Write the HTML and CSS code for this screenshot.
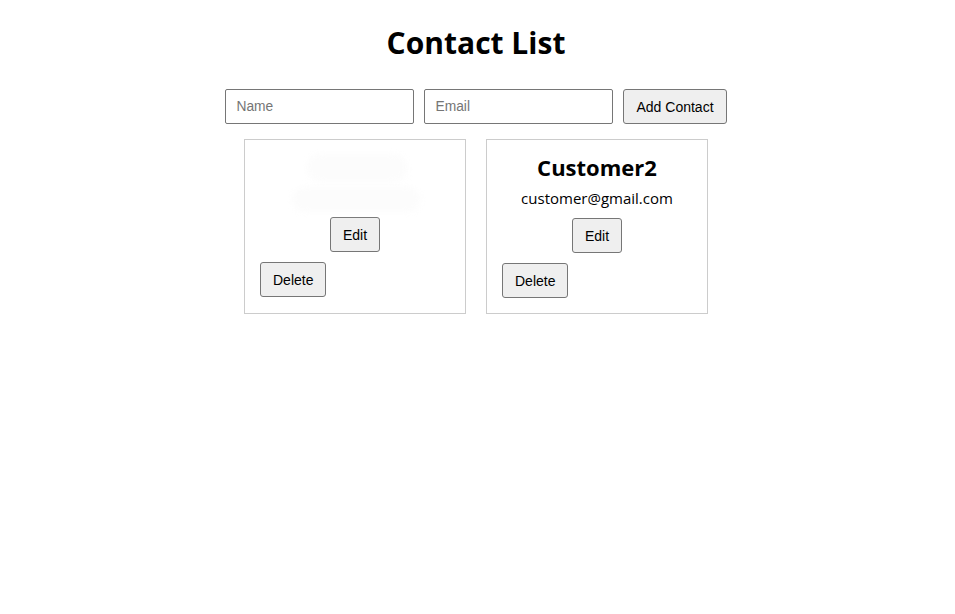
FILE: index.html
```html
<!DOCTYPE html>
<html lang="en">
<head>
<meta charset="utf-8">
<title>Contact List</title>
<link rel="stylesheet" href="styles.css">
</head>
<body>
<div class="app">
  <h1 class="title">Contact List</h1>
  <form class="add-form">
    <input class="field" type="text" placeholder="Name">
    <input class="field" type="email" placeholder="Email">
    <button class="btn" type="button">Add Contact</button>
  </form>
  <div class="cards">
    <div class="card">
      <div class="ghost">
        <div class="ghost-name"></div>
        <div class="ghost-email"></div>
      </div>
      <div class="edit-row"><button class="btn" type="button">Edit</button></div>
      <div class="delete-row"><button class="btn" type="button">Delete</button></div>
    </div>
    <div class="card">
      <h3 class="name">Customer2</h3>
      <p class="email">customer@gmail.com</p>
      <div class="edit-row"><button class="btn" type="button">Edit</button></div>
      <div class="delete-row"><button class="btn" type="button">Delete</button></div>
    </div>
  </div>
</div>
</body>
</html>
```
FILE: styles.css
```css
html, body {
  margin: 0;
  padding: 0;
  background: #ffffff;
}
body {
  font-family: "Open Sans", "Noto Sans", sans-serif;
  color: #000;
}
.app {
  display: flex;
  flex-direction: column;
  align-items: center;
  padding-top: 23px;
  padding-right: 3px;
}
.title {
  margin: 0 0 27px 0;
  font-size: 30px;
  font-weight: 700;
  line-height: 39px;
}
.add-form {
  display: flex;
  gap: 10px;
  margin-bottom: 15px;
}
.field {
  box-sizing: border-box;
  width: 189px;
  height: 35px;
  padding: 0 10px;
  border: 1px solid #767676;
  border-radius: 2px;
  font-family: "Liberation Sans", Arial, sans-serif;
  font-size: 13.8px;
  color: #000;
  background: #fff;
}
.field::placeholder {
  color: #757575;
}
.btn {
  box-sizing: border-box;
  height: 35px;
  padding: 0 12px;
  border: 1px solid #767676;
  border-radius: 3px;
  background: #efefef;
  font-family: "Liberation Sans", Arial, sans-serif;
  font-size: 14px;
  color: #000;
}
.cards {
  display: flex;
  gap: 20px;
}
.card {
  box-sizing: border-box;
  width: 222px;
  height: 175px;
  border: 1px solid #cccccc;
  padding: 16px 15px;
  display: flex;
  flex-direction: column;
}
.name {
  margin: 0;
  text-align: center;
  font-size: 22px;
  font-weight: 700;
  line-height: 22px;
}
.email {
  margin: 9px 0 9px 0;
  text-align: center;
  font-size: 15px;
  line-height: 22px;
}
.ghost {
  height: 62px;
  position: relative;
}
.ghost-name {
  position: absolute;
  left: 47px;
  top: -2px;
  width: 100px;
  height: 28px;
  border-radius: 14px;
  background: #fcfcfc;
  filter: blur(3px);
}
.ghost-email {
  position: absolute;
  left: 33px;
  top: 31px;
  width: 127px;
  height: 25px;
  border-radius: 12px;
  background: #fcfcfc;
  filter: blur(3px);
}
.edit-row {
  display: flex;
  justify-content: center;
}
.delete-row {
  display: flex;
  margin-top: 10px;
}
```
